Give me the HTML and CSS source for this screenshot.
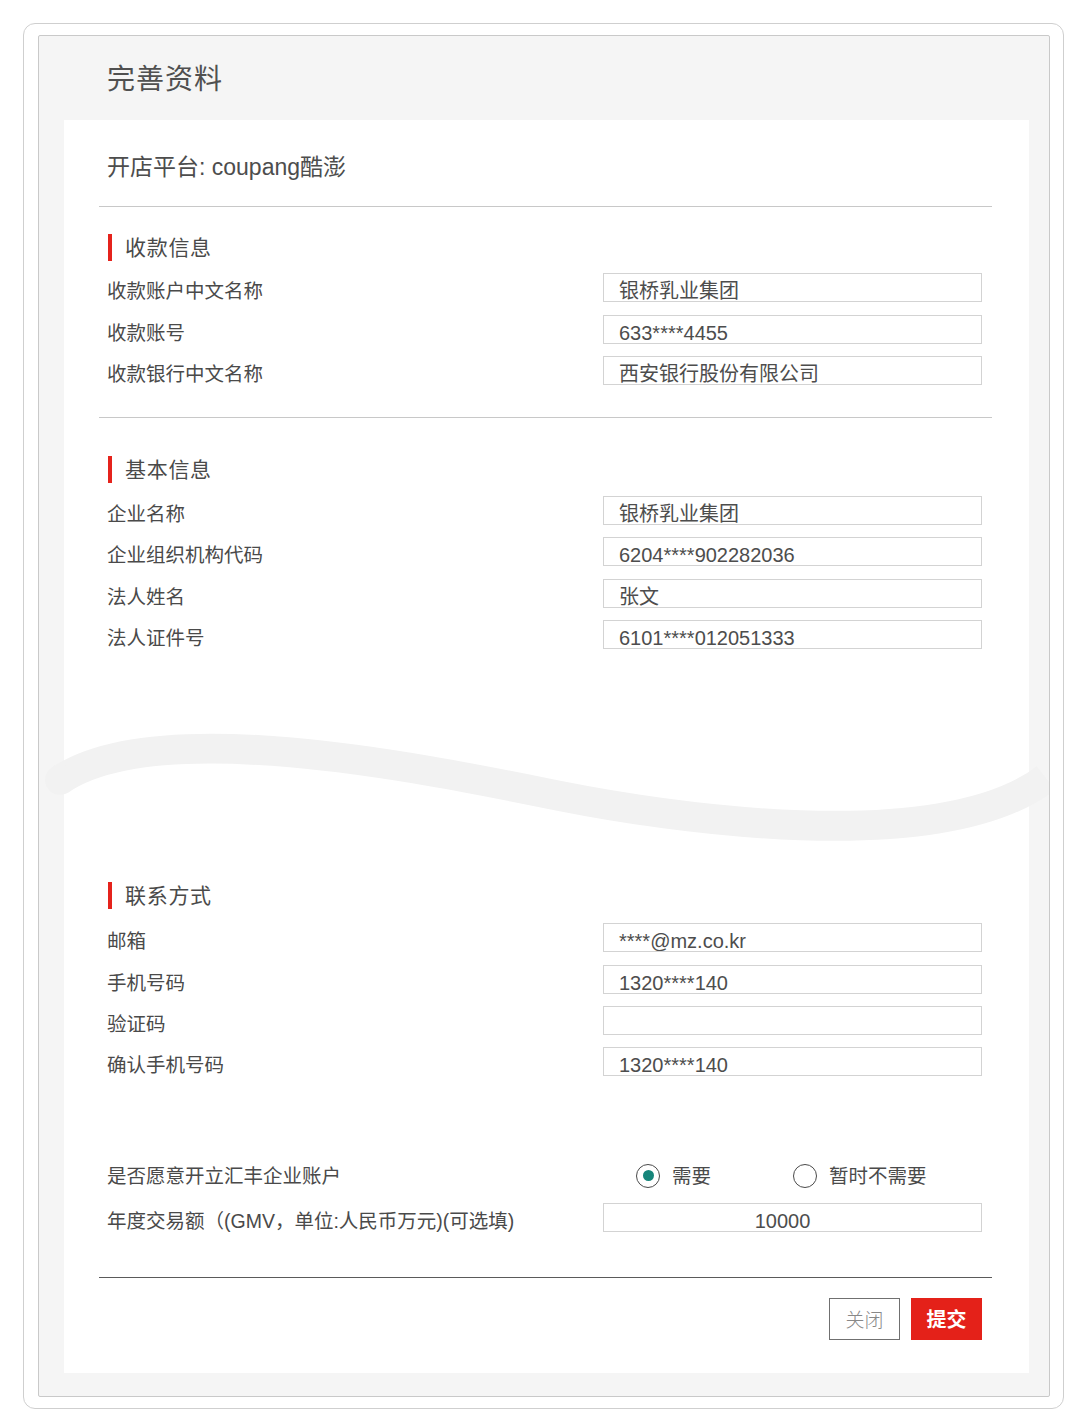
FILE: index.html
```html
<!DOCTYPE html>
<html lang="zh-CN">
<head>
<meta charset="utf-8">
<title>完善资料</title>
<link rel="stylesheet" href="styles.css">
</head>
<body>
<div class="frame">
  <div class="panel">
    <h1 class="panel-title">完善资料</h1>
    <div class="card">
      <div class="platform">开店平台: coupang酷澎</div>
      <div class="divider"></div>

      <section class="section sec-pay">
        <h2 class="section-title">收款信息</h2>
        <div class="rows">
          <div class="row"><span class="label">收款账户中文名称</span><div class="field">银桥乳业集团</div></div>
          <div class="row"><span class="label">收款账号</span><div class="field">633****4455</div></div>
          <div class="row"><span class="label">收款银行中文名称</span><div class="field">西安银行股份有限公司</div></div>
        </div>
      </section>

      <div class="divider divider-mid"></div>

      <section class="section sec-basic">
        <h2 class="section-title">基本信息</h2>
        <div class="rows">
          <div class="row"><span class="label">企业名称</span><div class="field">银桥乳业集团</div></div>
          <div class="row"><span class="label">企业组织机构代码</span><div class="field">6204****902282036</div></div>
          <div class="row"><span class="label">法人姓名</span><div class="field">张文</div></div>
          <div class="row"><span class="label">法人证件号</span><div class="field">6101****012051333</div></div>
        </div>
      </section>

      <section class="section sec-contact">
        <h2 class="section-title">联系方式</h2>
        <div class="rows">
          <div class="row"><span class="label">邮箱</span><div class="field">****@mz.co.kr</div></div>
          <div class="row"><span class="label">手机号码</span><div class="field">1320****140</div></div>
          <div class="row"><span class="label">验证码</span><div class="field">&nbsp;</div></div>
          <div class="row"><span class="label">确认手机号码</span><div class="field">1320****140</div></div>
        </div>
      </section>

      <div class="rows rows-extra">
        <div class="row row-radio">
          <span class="label">是否愿意开立汇丰企业账户</span>
          <div class="radio-group">
            <label class="radio-option"><span class="radio checked"></span><span class="radio-text">需要</span></label>
            <label class="radio-option"><span class="radio"></span><span class="radio-text">暂时不需要</span></label>
          </div>
        </div>
        <div class="row"><span class="label">年度交易额（(GMV，单位:人民币万元)(可选填)</span><div class="field field-center">10000</div></div>
      </div>

      <div class="divider divider-dark"></div>

      <div class="actions">
        <button class="btn btn-close" type="button">关闭</button>
        <button class="btn btn-submit" type="button">提交</button>
      </div>
    </div>

    <svg class="wave" viewBox="39 716 1010 140" width="1010" height="140" aria-hidden="true">
      <path d="M 60 780 C 160 712, 440 772, 560 796 C 660 816, 940 860, 1046 778" fill="none" stroke="#f2f2f2" stroke-width="30" stroke-linecap="butt"/>
      <circle cx="60" cy="780" r="15" fill="#f2f2f2"/>
    </svg>
  </div>
</div>
</body>
</html>
```

FILE: styles.css
```css
* {
  box-sizing: border-box;
}

html, body {
  margin: 0;
  padding: 0;
  background: #ffffff;
}

body {
  font-family: "Liberation Sans", "Noto Sans CJK SC", sans-serif;
  color: #4a4a4a;
}

.frame {
  margin: 23px 0 0 23px;
  width: 1041px;
  border: 1px solid #cfcfcf;
  border-radius: 12px;
  padding: 11px 13px 11px 14px;
  background: #ffffff;
}

.panel {
  position: relative;
  border: 1px solid #c9c9c9;
  border-radius: 2px;
  background: #f5f5f5;
}

.panel-title {
  margin: 0;
  padding: 30px 0 26px 68px;
  font-size: 28px;
  line-height: 28px;
  font-weight: normal;
  letter-spacing: 1px;
  color: #505050;
}

.card {
  margin: 0 20px 23px 25px;
  background: #ffffff;
  padding: 32px 37px 33px 35px;
}

.platform {
  padding-left: 8px;
  font-size: 23px;
  line-height: 30px;
  color: #4d4d4d;
}

.divider {
  height: 1px;
  background: #c8c8c8;
  margin-top: 24px;
}

.divider-mid {
  margin-top: 32px;
}

.divider-dark {
  margin-top: 45px;
  background: #5a5a5a;
}

.section-title {
  margin: 27px 0 0 0;
  padding-left: 9px;
  display: flex;
  align-items: center;
  height: 27px;
  font-size: 21px;
  line-height: 27px;
  font-weight: normal;
  letter-spacing: 0.7px;
  color: #4a4a4a;
}

.section-title::before {
  content: "";
  width: 4px;
  height: 27px;
  background: #e5231c;
  margin-right: 13px;
}

.sec-basic .section-title {
  margin-top: 38px;
}

.sec-contact .section-title {
  margin-top: 233px;
}

.rows {
  display: flex;
  flex-direction: column;
  gap: 12.4px;
  margin-top: 12px;
  padding: 0 10px 0 8px;
}

.sec-pay .rows {
  gap: 12.5px;
}

.sec-basic .rows {
  margin-top: 13px;
}

.sec-contact .rows {
  margin-top: 14px;
}

.rows-extra {
  margin-top: 85px;
}

.row {
  display: flex;
  align-items: baseline;
}

.label {
  flex: 1;
  font-size: 19.5px;
  line-height: 20px;
  color: #4a4a4a;
}

.field {
  width: 379px;
  height: 29px;
  border: 1px solid #d3d3d3;
  padding: 7px 0 0 15px;
  font-size: 20px;
  line-height: 20px;
  color: #4d4d4d;
  white-space: nowrap;
  overflow: hidden;
}

.field-center {
  text-align: center;
  padding: 7px 20px 0 0;
}

.row-radio {
  align-items: center;
  height: 29px;
}

.radio-group {
  width: 379px;
  height: 29px;
  display: flex;
  align-items: center;
  padding-left: 33px;
}

.radio-option {
  width: 157px;
  display: flex;
  align-items: center;
  gap: 12px;
}

.radio {
  width: 24px;
  height: 24px;
  border: 1.5px solid #4a4a4a;
  border-radius: 50%;
  display: flex;
  align-items: center;
  justify-content: center;
  flex: none;
}

.radio.checked::after {
  content: "";
  width: 11px;
  height: 11px;
  border-radius: 50%;
  background: #15857a;
}

.radio-text {
  font-size: 19.5px;
  line-height: 20px;
  color: #4a4a4a;
  white-space: nowrap;
}

.actions {
  display: flex;
  justify-content: flex-end;
  gap: 11px;
  margin-top: 20px;
  padding-right: 10px;
}

.btn {
  width: 71px;
  height: 42px;
  padding: 0;
  font-family: "Liberation Sans", "Noto Sans CJK SC", sans-serif;
  cursor: pointer;
}

.btn-close {
  background: #ffffff;
  border: 1px solid #707070;
  color: #888888;
  font-size: 19px;
  font-weight: 300;
}

.btn-submit {
  background: #e42119;
  border: none;
  color: #ffffff;
  font-size: 20px;
  font-weight: bold;
}

.wave {
  position: absolute;
  left: 0;
  top: 680px;
  width: 1010px;
  height: 140px;
  pointer-events: none;
}
```
